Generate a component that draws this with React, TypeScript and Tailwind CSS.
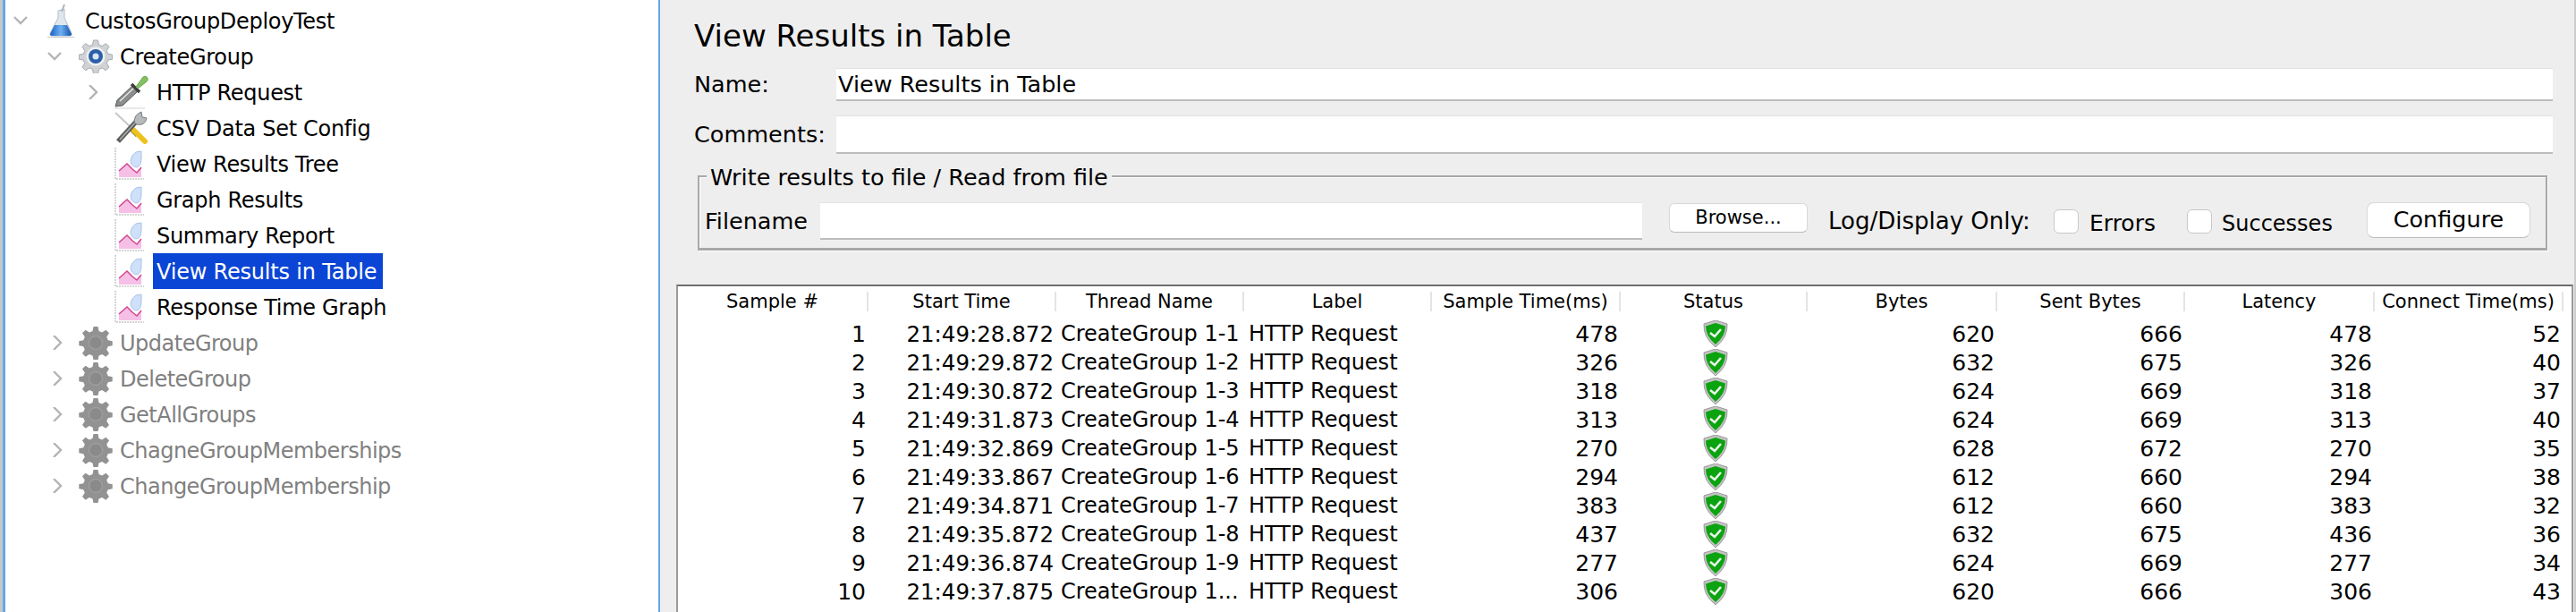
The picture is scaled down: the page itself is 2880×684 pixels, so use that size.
import React from "react";

const font = "[font-family:'DejaVu_Sans',sans-serif]";

function Chevron({ open, className }: { open?: boolean; className?: string }) {
  return (
    <svg viewBox="0 0 16 16" className={`w-[16px] h-[16px] ${className ?? ""}`} fill="none" stroke="#b4b4b4" strokeWidth="2.4">
      {open ? <path d="M1 4 L8 11 L15 4" /> : <path d="M3 0 L11 8 L3 16" />}
    </svg>
  );
}

function Flask() {
  return (
    <svg viewBox="0 0 30 38" className="w-[30px] h-[38px] shrink-0">
      <defs>
        <linearGradient id="fl" x1="0" x2="1">
          <stop offset="0" stopColor="#1c5fc8" />
          <stop offset="0.5" stopColor="#6fb0f0" />
          <stop offset="1" stopColor="#1450b0" />
        </linearGradient>
      </defs>
      <path d="M12 8 L12 16 L3 33 Q2 36 5 36 L25 36 Q28 36 27 33 L19 16 L19 6 Z" fill="#dfe6ee" stroke="#b5bcc5" strokeWidth="1" />
      <path d="M8 24 L22 24 L27 34 Q27 36 25 36 L5 36 Q3 36 3 34 Z" fill="url(#fl)" />
      <path d="M19 1 L16 9" stroke="#aab2bb" strokeWidth="2" />
      <path d="M0 37.5 L30 37.5" stroke="#c4c8cc" strokeWidth="1" />
    </svg>
  );
}

const cogPath =
  "M16.5 1 h5 l1 5 l3.6 1.5 l4.3-2.8 l3.6 3.6 l-2.8 4.3 l1.5 3.6 l5 1 v5 l-5 1 l-1.5 3.6 l2.8 4.3 l-3.6 3.6 l-4.3-2.8 l-3.6 1.5 l-1 5 h-5 l-1-5 l-3.6-1.5 l-4.3 2.8 l-3.6-3.6 l2.8-4.3 l-1.5-3.6 l-5-1 v-5 l5-1 l1.5-3.6 l-2.8-4.3 l3.6-3.6 l4.3 2.8 l3.6-1.5 Z";

function Gear({ disabled }: { disabled?: boolean }) {
  if (disabled) {
    return (
      <svg viewBox="0 0 38 38" className="w-[38px] h-[38px] shrink-0">
        <path d={cogPath} fill="#929292" />
        <circle cx="19" cy="19" r="7.5" fill="#8a8a8a" stroke="#9e9e9e" strokeWidth="1.5" />
      </svg>
    );
  }
  return (
    <svg viewBox="0 0 38 38" className="w-[38px] h-[38px] shrink-0">
      <path d={cogPath} fill="#d0d3d6" stroke="#a6a9ad" strokeWidth="1" />
      <circle cx="19" cy="19" r="10.5" fill="#eef0f2" />
      <circle cx="19" cy="19" r="8" fill="#2c5fa8" />
      <circle cx="19" cy="19" r="3.5" fill="#dbe6f4" />
    </svg>
  );
}

function Dropper() {
  return (
    <svg viewBox="0 0 38 38" className="w-[38px] h-[38px] shrink-0">
      <path d="M1 35 L3 28 L21 11 L27 17 L9 34 Z" fill="#8b8d8f" stroke="#555" strokeWidth="1" />
      <path d="M6 29 L22 14" stroke="#e4e4e4" strokeWidth="1.5" />
      <path d="M19 10 L28 19" stroke="#3d3d3d" strokeWidth="3.5" />
      <path d="M24 13 L32 2 Q35 0 37 3 Q38 6 35 8 L26 15 Z" fill="#85bf62" stroke="#6fa94f" strokeWidth="1" />
      <path d="M0 37 L34 37" stroke="#d4d4d4" strokeWidth="1.2" />
    </svg>
  );
}

function Tools() {
  return (
    <svg viewBox="0 0 38 38" className="w-[38px] h-[38px] shrink-0">
      <path d="M1 2 L35 34" stroke="#c8c8c8" strokeWidth="2" />
      <path d="M18 19 L26 27" stroke="#7a6a20" strokeWidth="6" />
      <path d="M21 21 L34 34" stroke="#eec21c" strokeWidth="6" strokeLinecap="round" />
      <path d="M4 34 L26 10" stroke="#5c5e60" strokeWidth="5.5" />
      <path d="M6 32 L25 11" stroke="#b5b7b9" strokeWidth="1.2" />
      <path d="M22 13 Q22 4 30 1 L31 7 L36 8 Q34 17 25 15 Z" fill="#b7babc" stroke="#77797b" strokeWidth="1" />
    </svg>
  );
}

function Chart() {
  return (
    <svg viewBox="0 0 34 36" className="w-[34px] h-[36px] shrink-0">
      <path d="M1 0 L1 35 L33 35" fill="none" stroke="#c6c6c8" strokeWidth="1.5" strokeDasharray="2 1" />
      <path d="M30 11 Q30 22 24 22 Q18 20 18 14 Q19 8 24 5 L30 4 Z" fill="#cfe0fa" stroke="#a9c2ea" strokeWidth="1" />
      <path d="M5 33 L5 26 L14 18 L20 24 L25 28 L30 22 L30 33 Z" fill="#f6bfe6" />
      <path d="M5 26 L14 18 L20 24 L25 28 L30 22" fill="none" stroke="#d2458e" strokeWidth="1.5" />
    </svg>
  );
}

function Shield() {
  return (
    <svg viewBox="0 0 30 30" className="w-[30px] h-[30px]">
      <path d="M15 0 L28 4 Q29 19 15 30 Q1 19 2 4 Z" fill="#c4c4c4" stroke="#9a9a9a" strokeWidth="1" />
      <path d="M15 3 L26 6.5 Q26 18 15 27 Q4 18 4 6.5 Z" fill="#0ba310" />
      <path d="M9 14 L14 18 L21 10" fill="none" stroke="#eaf6ea" strokeWidth="2.6" />
    </svg>
  );
}

type TreeRow = {
  label: string;
  depth: number;
  icon: React.ReactNode;
  chevron?: "open" | "closed";
  disabled?: boolean;
  selected?: boolean;
};

const tree: TreeRow[] = [
  { label: "CustosGroupDeployTest", depth: 0, icon: <Flask />, chevron: "open" },
  { label: "CreateGroup", depth: 1, icon: <Gear />, chevron: "open" },
  { label: "HTTP Request", depth: 2, icon: <Dropper />, chevron: "closed" },
  { label: "CSV Data Set Config", depth: 2, icon: <Tools /> },
  { label: "View Results Tree", depth: 2, icon: <Chart /> },
  { label: "Graph Results", depth: 2, icon: <Chart /> },
  { label: "Summary Report", depth: 2, icon: <Chart /> },
  { label: "View Results in Table", depth: 2, icon: <Chart />, selected: true },
  { label: "Response Time Graph", depth: 2, icon: <Chart /> },
  { label: "UpdateGroup", depth: 1, icon: <Gear disabled />, chevron: "closed", disabled: true },
  { label: "DeleteGroup", depth: 1, icon: <Gear disabled />, chevron: "closed", disabled: true },
  { label: "GetAllGroups", depth: 1, icon: <Gear disabled />, chevron: "closed", disabled: true },
  { label: "ChagneGroupMemberships", depth: 1, icon: <Gear disabled />, chevron: "closed", disabled: true },
  { label: "ChangeGroupMembership", depth: 1, icon: <Gear disabled />, chevron: "closed", disabled: true },
];

const rows = [
  [1, "21:49:28.872", "CreateGroup 1-1", 478, 620, 666, 478, 52],
  [2, "21:49:29.872", "CreateGroup 1-2", 326, 632, 675, 326, 40],
  [3, "21:49:30.872", "CreateGroup 1-3", 318, 624, 669, 318, 37],
  [4, "21:49:31.873", "CreateGroup 1-4", 313, 624, 669, 313, 40],
  [5, "21:49:32.869", "CreateGroup 1-5", 270, 628, 672, 270, 35],
  [6, "21:49:33.867", "CreateGroup 1-6", 294, 612, 660, 294, 38],
  [7, "21:49:34.871", "CreateGroup 1-7", 383, 612, 660, 383, 32],
  [8, "21:49:35.872", "CreateGroup 1-8", 437, 632, 675, 436, 36],
  [9, "21:49:36.874", "CreateGroup 1-9", 277, 624, 669, 277, 34],
  [10, "21:49:37.875", "CreateGroup 1...", 306, 620, 666, 306, 43],
] as const;

const headers = ["Sample #", "Start Time", "Thread Name", "Label", "Sample Time(ms)", "Status", "Bytes", "Sent Bytes", "Latency", "Connect Time(ms)"];

const gridCols = "grid grid-cols-[213px_210px_210px_210px_211px_209px_212px_210px_212px_211px]";

function Tree() {
  return (
    <div className="w-[736px] h-full shrink-0 bg-white overflow-hidden border-l-[3px] border-l-[#c8c8c8]">
      <div className="border-l-[3px] border-l-[#62a8ea] h-[684px] pt-[3px]">
        {tree.map((r) => (
          <div key={r.label} className="flex items-center h-[40px]">
            <div
              className={
                r.depth === 0 ? "w-[47px] pl-[9px] shrink-0" : r.depth === 1 ? "w-[82px] pl-[47px] shrink-0" : "w-[122px] pl-[91px] shrink-0"
              }
            >
              {r.chevron && <Chevron open={r.chevron === "open"} className={r.depth === 1 && r.chevron === "closed" ? "ml-[4px]" : ""} />}
            </div>
            <div className={r.depth === 0 ? "w-[42px] shrink-0" : r.depth === 1 ? "w-[46px] shrink-0" : "w-[47px] shrink-0"}>{r.icon}</div>
            <span
              className={`text-[24px] h-[40px] pt-[2px] leading-[38px] pl-[4px] -ml-[4px] whitespace-nowrap ${
                r.selected
                  ? "bg-[#0b45d5] text-white tracking-[-0.2px] pr-[7px]"
                  : r.disabled
                    ? "text-[#808080] tracking-[-0.5px]"
                    : "text-black tracking-[-0.3px] pr-[4px]"
              }`}
            >
              {r.label}
            </span>
          </div>
        ))}
      </div>
    </div>
  );
}

function Input({ className, value }: { className: string; value?: string }) {
  return (
    <div className={`bg-white border-b-2 border-b-[#bdbdbd] border-t border-t-[#e2e2e2] text-[25.5px] text-black pl-[2px] flex items-center ${className}`}>
      {value}
    </div>
  );
}

function FileGroup() {
  return (
    <div className="relative shrink-0 mt-[24px] ml-[42px] mr-[30px] h-[84px] border-2 border-[#a8a8a8] border-b-[3px] flex items-start shadow-[inset_1px_1px_0_#fff,1px_1px_0_#fff]">
      <span className="absolute -top-[18px] left-[8px] bg-[#eeeeee] px-[4px] text-[25.5px] leading-[36px] text-black whitespace-nowrap">Write results to file / Read from file</span>
      <span className="ml-[6px] w-[129px] mt-[29px] text-[25.5px] leading-[40px]">Filename</span>
      <Input className="w-[919px] h-[42px] mt-[28px]" />
      <button className="ml-[30px] w-[155px] h-[33px] mt-[29px] bg-white rounded-[6px] border border-[#d8d8d8] border-b-[#bbbbbb] text-[21px] leading-none">Browse...</button>
      <span className="ml-[23px] w-[228px] mt-[29px] text-[26px] leading-[40px] whitespace-nowrap">Log/Display Only:</span>
      <span className="ml-[24px] mt-[36px] w-[28px] h-[27px] bg-white rounded-[6px] border border-[#c8c8c8]" />
      <span className="ml-[12px] w-[72px] mt-[32px] text-[25px] leading-[40px]">Errors</span>
      <span className="ml-[37px] mt-[36px] w-[28px] h-[27px] bg-white rounded-[6px] border border-[#c8c8c8]" />
      <span className="ml-[11px] w-[127px] mt-[32px] text-[24px] leading-[40px]">Successes</span>
      <button className="ml-[35px] w-[183px] h-[40px] mt-[28px] bg-white rounded-[8px] border border-[#d8d8d8] border-b-[#bbbbbb] text-[25.5px] leading-none">Configure</button>
    </div>
  );
}

function Table() {
  return (
    <div className="ml-[18px] mr-px mt-[38px] flex-1 min-h-0 overflow-hidden bg-white border-t-2 border-t-[#6e6e6e] border-x-2 border-x-[#9a9a9a]">
      <div className={`${gridCols} h-[37px] pt-[6px]`}>
        {headers.map((h) => (
          <div key={h} className="h-[22px] flex items-center justify-center border-r-2 border-r-[#e4e4e4] text-[21px] leading-none whitespace-nowrap text-black">
            {h}
          </div>
        ))}
      </div>
      {rows.map((r) => (
        <div key={r[0]} className={`${gridCols} h-[32px] pt-[1px] text-[25px] leading-[31px] text-black`}>
          <div className="text-right pr-[3px]">{r[0]}</div>
          <div className="text-right pr-[3px] whitespace-nowrap text-[24.5px]">{r[1]}</div>
          <div className="pl-[5px] whitespace-nowrap text-[24px]">{r[2]}</div>
          <div className="pl-[5px] whitespace-nowrap text-[24px]">HTTP Request</div>
          <div className="text-right pr-[3px]">{r[3]}</div>
          <div className="flex justify-center items-center pl-[3px] -mt-[1px]">
            <Shield />
          </div>
          <div className="text-right pr-[3px]">{r[4]}</div>
          <div className="text-right pr-[3px]">{r[5]}</div>
          <div className="text-right pr-[3px]">{r[6]}</div>
          <div className="text-right pr-[3px]">{r[7]}</div>
        </div>
      ))}
    </div>
  );
}

export default function App() {
  return (
    <div className={`flex w-[2880px] h-[684px] overflow-hidden bg-white ${font}`}>
      <Tree />
      <div className="flex-1 h-full bg-[#eeeeee] border-l-2 border-l-[#62a8ea] border-r-2 border-r-[#cdcdcd] flex flex-col min-w-0">
        <h1 className="shrink-0 pl-[38px] pt-[20px] h-[76px] text-[34px] leading-[40px] font-normal text-black">View Results in Table</h1>
        <div className="shrink-0 flex items-center pl-[38px] pr-[24px] h-[37px]">
          <span className="w-[159px] text-[25.5px]">Name:</span>
          <Input className="flex-1 h-[37px]" value="View Results in Table" />
        </div>
        <div className="shrink-0 flex items-center pl-[38px] pr-[24px] h-[43px] mt-[16px]">
          <span className="w-[159px] text-[25.5px]">Comments:</span>
          <Input className="flex-1 h-[43px]" />
        </div>
        <FileGroup />
        <Table />
      </div>
    </div>
  );
}
